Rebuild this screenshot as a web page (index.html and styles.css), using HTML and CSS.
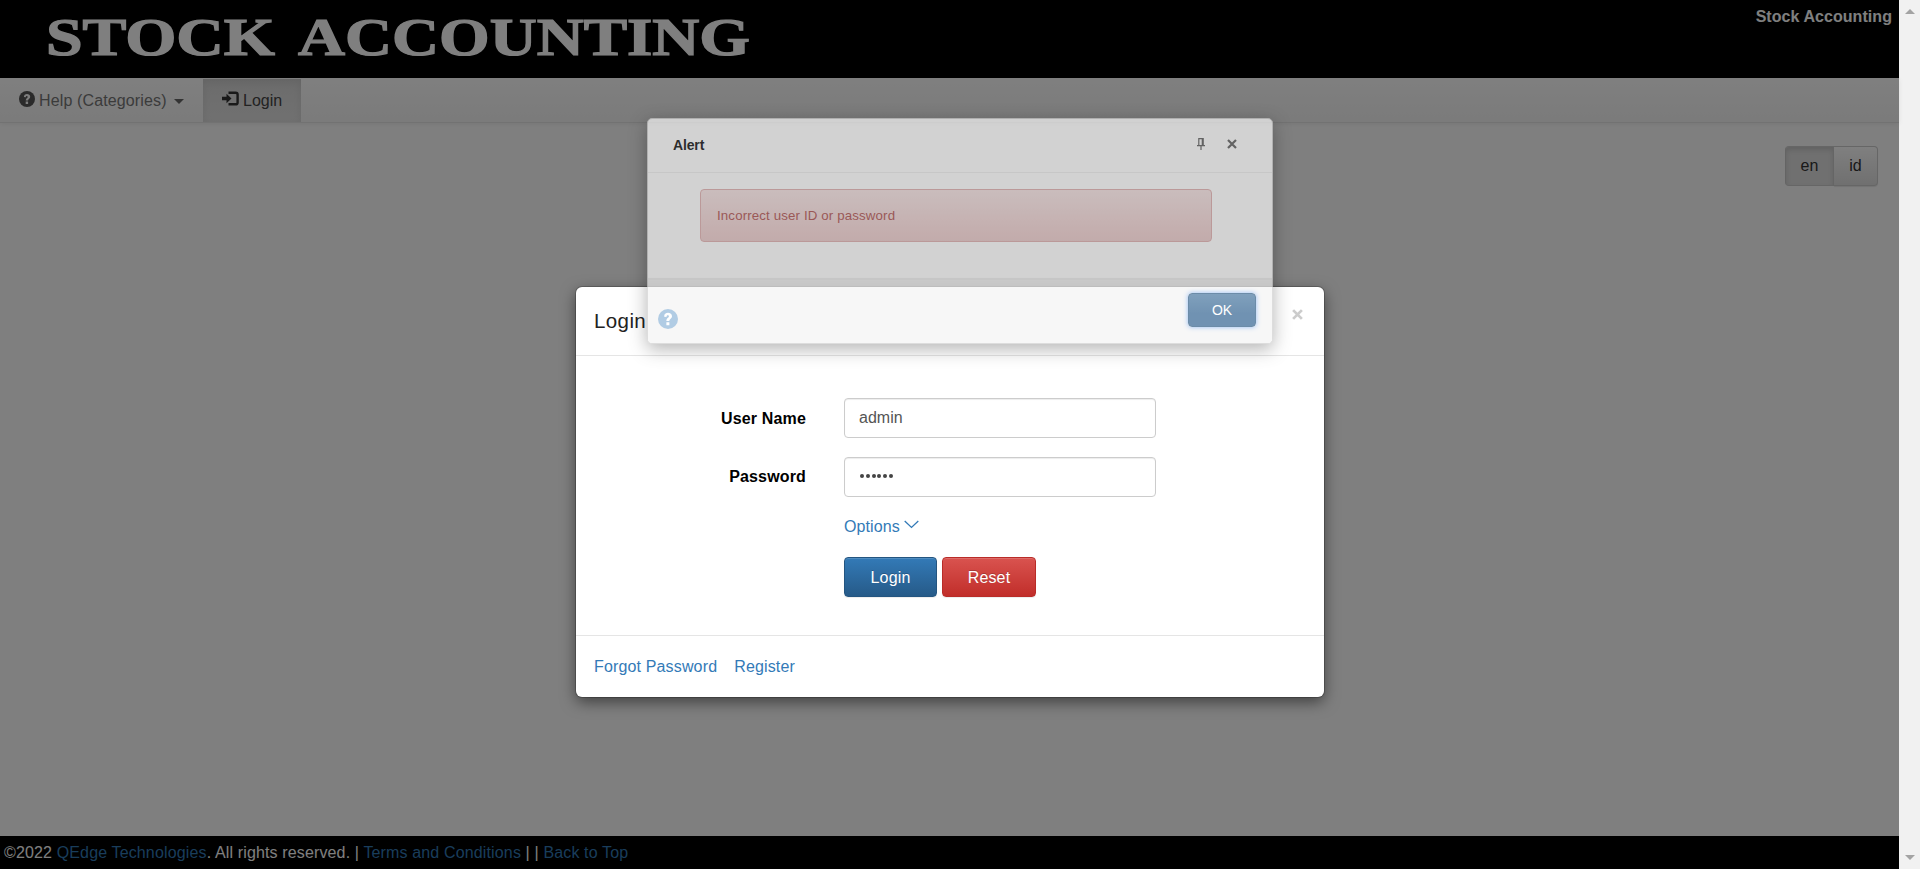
FILE: index.html
```html
<!DOCTYPE html>
<html lang="en">
<head>
<meta charset="utf-8">
<title>Stock Accounting</title>
<link rel="stylesheet" href="styles.css">
</head>
<body>
<div class="window">
  <div class="page">
    <header class="header">
      <svg class="logo" width="760" height="78" role="img" aria-label="Stock Accounting">
        <text x="46" y="55" textLength="229" lengthAdjust="spacingAndGlyphs">STOCK</text>
        <text x="298" y="55" textLength="452" lengthAdjust="spacingAndGlyphs">ACCOUNTING</text>
      </svg>
      <strong class="site-name">Stock Accounting</strong>
    </header>
    <nav class="navbar">
      <a class="nav-item help">
        <svg class="icon" width="16" height="16" viewBox="0 0 16 16"><circle cx="8" cy="8" r="8" fill="currentColor"/><path d="M4.9 6.1C4.9 3.9 6.2 3 8 3s3.2 1 3.2 2.8c0 2-2.1 2.2-2.1 3.7H6.7c0-2.4 2-2.6 2-3.6 0-.6-.3-.9-.9-.9s-1 .4-1 1.3zM6.7 10.5h2.4V13H6.7z" fill="#fafafa"/></svg>
        <span>Help (Categories)</span><i class="caret"></i>
      </a>
      <a class="nav-item active">
        <svg class="icon" width="17" height="16" viewBox="0 0 17 16"><path d="M6.5 1.7h7.2q1.9 0 1.9 1.9v7.8q0 1.9-1.9 1.9H6.5" fill="none" stroke="currentColor" stroke-width="2.4"/><path d="M0 5.7h4.5V2.8l5 4.7-5 4.7V9.3H0z" fill="currentColor"/></svg>
        <span>Login</span>
      </a>
    </nav>
    <main class="content">
      <div class="lang"><button class="lang-btn on">en</button><button class="lang-btn">id</button></div>
    </main>
    <footer class="footer">©2022 <a>QEdge Technologies</a>. All rights reserved. | <a>Terms and Conditions</a> | | <a>Back to Top</a></footer>
    <div class="backdrop"></div>

    <section class="modal">
      <div class="modal-header"><h4>Login</h4>
        <svg class="close" width="11" height="11" viewBox="0 0 10 10"><path d="M1 1l8 8M9 1L1 9" stroke="#ccc" stroke-width="2.5"/></svg>
      </div>
      <div class="modal-body">
        <div class="row"><label for="user">User Name</label><input id="user" class="input" value="admin"></div>
        <div class="row"><label for="pass">Password</label><div id="pass" class="input dots"><i></i><i></i><i></i><i></i><i></i><i></i></div></div>
        <a class="options">Options <svg width="15" height="9" viewBox="0 0 15 9"><path d="M.7 1l6.8 6.4L14.3 1" fill="none" stroke="currentColor" stroke-width="1.3"/></svg></a>
        <div class="actions"><button class="btn primary">Login</button><button class="btn danger">Reset</button></div>
      </div>
      <div class="modal-footer"><a>Forgot Password</a><a>Register</a></div>
    </section>

    <section class="alert-dialog">
      <div class="dlg-header"><b>Alert</b>
        <div class="tools">
          <svg width="8" height="12" viewBox="0 0 8 12"><path d="M1.8 8V.6h4.4V8M0 7.6h8M4 8v4M5.3.5V8" fill="none" stroke="#555" stroke-width="1.2"/></svg>
          <svg width="10" height="10" viewBox="0 0 10 10"><path d="M1 1l8 8M9 1L1 9" stroke="#555" stroke-width="2.2"/></svg>
        </div>
      </div>
      <div class="dlg-body"><div class="message">Incorrect user ID or password</div></div>
      <div class="dlg-footer">
        <svg class="dlg-help" width="20" height="20" viewBox="0 0 16 16"><circle cx="8" cy="8" r="8" fill="#88b1d6"/><path d="M4.9 6.1C4.9 3.9 6.2 3 8 3s3.2 1 3.2 2.8c0 2-2.1 2.2-2.1 3.7H6.7c0-2.4 2-2.6 2-3.6 0-.6-.3-.9-.9-.9s-1 .4-1 1.3zM6.7 10.5h2.4V13H6.7z" fill="#fff"/></svg>
        <button class="ok">OK</button>
      </div>
    </section>
  </div>
  <aside class="scrollbar"><i class="up"></i><i class="down"></i></aside>
</div>
</body>
</html>
```

FILE: styles.css
```css
* { box-sizing: border-box; }
body { margin: 0; overflow: hidden; font: 16px/22px "Liberation Sans", Arial, sans-serif; color: #000; }
button, input { font: inherit; }
a { color: #337ab7; text-decoration: none; }
.window { display: flex; width: 1920px; height: 869px; }
.page { position: relative; flex: 1; display: flex; flex-direction: column; background: #fff; }

.header { display: flex; justify-content: space-between; height: 78px; background: #000; color: #fff; }
.logo text { font: bold 52px "Liberation Serif", serif; fill: #fff; stroke: #fff; stroke-width: 1.2px; }
.site-name { padding: 6px 7px 0 0; letter-spacing: .06px; }

.navbar { display: flex; height: 45px; padding-top: 1px; border-bottom: 1px solid #e5e5e5; background: linear-gradient(#fff, #f6f6f6); box-shadow: 0 1px 5px rgba(0,0,0,.075); }
.nav-item { display: flex; align-items: center; color: #777; }
.help { width: 203px; padding-left: 19px; letter-spacing: .13px; }
.nav-item .icon { margin: -3px 5px 0 0; color: #555; }
.help .icon { margin-right: 4px; }
.caret { margin: 2px 0 0 7px; border: 5px solid transparent; border-top-color: #666; border-bottom: 0; }
.active { width: 98px; padding-left: 19px; color: #444; background: linear-gradient(#d8d8d8, #e2e2e2); box-shadow: inset 0 3px 9px rgba(0,0,0,.075); }
.active .icon { color: #333; margin-right: 4px; }

.content { flex: 1; display: flex; justify-content: flex-end; align-items: flex-start; padding: 23px 21px 0 0; }
.lang { display: flex; }
.lang-btn { width: 44px; height: 40px; padding: 0 0 1px; border: 1px solid #ccc; border-radius: 0 4px 4px 0; border-left: 0; background: linear-gradient(#fff, #e0e0e0); color: #333; box-shadow: 0 1px 1px rgba(0,0,0,.1); }
.lang-btn.on { width: 49px; border-left: 1px solid #c8c8c8; border-radius: 4px 0 0 4px; background: #e0e0e0; box-shadow: inset 0 3px 5px rgba(0,0,0,.125); }
.footer { height: 33px; padding: 6px 4px; background: #000; color: #fff; letter-spacing: .142px; }
.backdrop { position: absolute; inset: 0; background: rgba(0,0,0,.5); }

.modal { position: absolute; left: 576px; top: 287px; width: 748px; height: 410px; display: flex; flex-direction: column; background: #fff; border-radius: 6px; box-shadow: 0 0 0 1px rgba(0,0,0,.2), 0 5px 15px rgba(0,0,0,.5); }
.modal-header { display: flex; justify-content: space-between; height: 69px; padding: 0 21px 0 18px; border-bottom: 1px solid #e5e5e5; }
.modal-header h4 { margin: 21px 0 0; font-weight: 400; font-size: 20.5px; line-height: 26px; color: #222; letter-spacing: .4px; }
.close { margin-top: 22px; }
.modal-body { flex: 1; padding: 42px 0 0; }
.row { display: flex; align-items: center; gap: 38px; margin-bottom: 19px; }
.row label { width: 230px; text-align: right; font-weight: 700; letter-spacing: .16px; }
.row:first-child label { padding-top: 2px; }
.input { width: 312px; height: 40px; padding: 0 14px; border: 1px solid #ccc; border-radius: 4px; color: #555; background: #fff; box-shadow: inset 0 1px 1px rgba(0,0,0,.075); }
.dots { display: flex; align-items: center; gap: 1.8px; padding: 0 15px 2px; }
.dots i { width: 4px; height: 4px; border-radius: 50%; background: #444; }
.options { display: block; margin-left: 268px; letter-spacing: .1px; }
.options svg { margin-bottom: 3px; }
.actions { display: flex; gap: 5px; margin: 19px 0 0 268px; }
.btn { width: 93px; height: 40px; padding: 1px 0 0; border: 1px solid #245580; border-radius: 4px; color: #fff; background: linear-gradient(#337ab7, #265a88); text-shadow: 0 -1px 0 rgba(0,0,0,.2); box-shadow: inset 0 1px 0 rgba(255,255,255,.15), 0 1px 1px rgba(0,0,0,.075); letter-spacing: .15px; }
.danger { width: 94px; border-color: #b92c28; background: linear-gradient(#d9534f, #c12e2a); }
.modal-footer { display: flex; gap: 17px; height: 62px; padding: 20px 18px; border-top: 1px solid #e5e5e5; letter-spacing: .15px; }

.alert-dialog { position: absolute; left: 647px; top: 118px; width: 626px; height: 226px; display: flex; flex-direction: column; opacity: .65; background: #fff; border: 1px solid #ccc; border-radius: 5px; overflow: hidden; box-shadow: 0 5px 18px rgba(0,0,0,.45); font-size: 14px; }
.dlg-header { display: flex; justify-content: space-between; height: 54px; padding: 15px 35px 0 25px; border-bottom: 1px solid #eee; }
.dlg-header b { letter-spacing: -.15px; }
.tools { display: flex; gap: 22px; align-items: center; height: 20px; }
.dlg-body { height: 105px; padding: 16px 60px 0 52px; }
.message { height: 53px; padding: 15px 16px; border: 1px solid #dca7a7; border-radius: 4px; background: linear-gradient(#f2dede, #e7c3c3); color: #a94442; font-size: 13.3px; letter-spacing: .13px; }
.dlg-footer { flex: 1; display: flex; justify-content: space-between; padding: 15px 16px 0 10px; border-top: 2px solid #eee; background: #f3f3f3; }
.dlg-help { margin-top: 14px; }
.ok { width: 68px; height: 34px; margin: -2px 0 0; padding: 0; border: 1px solid #1f4f7a; border-radius: 4px; color: #fff; background: linear-gradient(#3d6f9a, #25598a 60%); box-shadow: 0 0 5px #5b9bf0; }

.scrollbar { display: flex; flex-direction: column; justify-content: space-between; width: 21px; padding: 9px 0 9px 6px; background: #f1f1f1; }
.scrollbar i { width: 0; border: 4.5px solid transparent; }
.scrollbar .up { border-width: 0 5px 5px; border-bottom-color: #a3a3a3; }
.scrollbar .down { border-width: 5px 5px 0; border-top-color: #a3a3a3; }
```
